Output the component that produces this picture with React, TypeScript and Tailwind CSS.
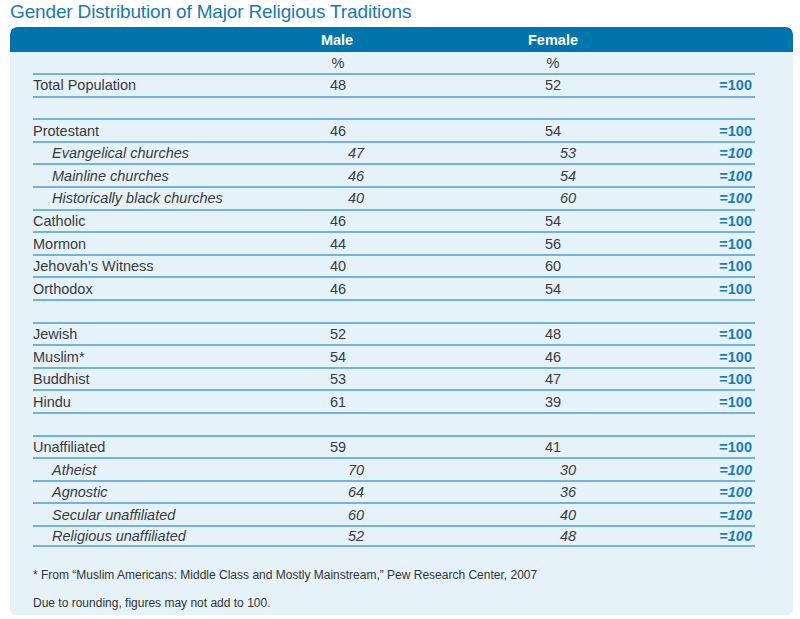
import React from "react";

type Row = { label?: string; male?: string; female?: string; sub?: boolean };

const rows: Row[] = [
  { label: "Total Population", male: "48", female: "52" },
  {},
  { label: "Protestant", male: "46", female: "54" },
  { label: "Evangelical churches", male: "47", female: "53", sub: true },
  { label: "Mainline churches", male: "46", female: "54", sub: true },
  { label: "Historically black churches", male: "40", female: "60", sub: true },
  { label: "Catholic", male: "46", female: "54" },
  { label: "Mormon", male: "44", female: "56" },
  { label: "Jehovah’s Witness", male: "40", female: "60" },
  { label: "Orthodox", male: "46", female: "54" },
  {},
  { label: "Jewish", male: "52", female: "48" },
  { label: "Muslim*", male: "54", female: "46" },
  { label: "Buddhist", male: "53", female: "47" },
  { label: "Hindu", male: "61", female: "39" },
  {},
  { label: "Unaffiliated", male: "59", female: "41" },
  { label: "Atheist", male: "70", female: "30", sub: true },
  { label: "Agnostic", male: "64", female: "36", sub: true },
  { label: "Secular unaffiliated", male: "60", female: "40", sub: true },
  { label: "Religious unaffiliated", male: "52", female: "48", sub: true },
];

const App = () => {
  return (
    <div className="w-[800px] h-[619px] bg-white font-['Liberation_Sans',Arial,sans-serif] text-[#3a3a3a]">
      <h1 className="pl-[10px] pt-[1px] h-[27px] text-[19px] leading-[22px] tracking-[-0.15px] text-[#1a78b2]">
        Gender Distribution of Major Religious Traditions
      </h1>
      <div className="ml-[10px] w-[783px] h-[588px] rounded-t-[7px] rounded-b-[6px] bg-[#e5f2fa] overflow-hidden">
        <div className="h-[25px] bg-[#0075ad] rounded-t-[7px] flex items-center pt-[3px] pl-[23px] text-white font-bold text-[14.5px]">
          <div className="w-[270px]"></div>
          <div className="w-[68px] text-center">Male</div>
          <div className="w-[147px]"></div>
          <div className="w-[70px] text-center">Female</div>
        </div>
        <div className="pl-[23px] w-[745px]">
          <div className="h-[21px] flex items-center text-[14.5px] pt-[3px]">
            <div className="w-[270px]"></div>
            <div className="w-[70px] text-center">%</div>
            <div className="w-[145px]"></div>
            <div className="w-[70px] text-center">%</div>
          </div>
          {rows.map((r, i) => (
            <div
              key={i}
              className={
                "h-[22.6px] flex items-center pt-[2px] text-[14.5px] border-t-2 border-[#72b3dc]" +
                (i === rows.length - 1 ? " border-b-2" : "")
              }
            >
              {r.label && (
                <>
                  <div className={r.sub ? "w-[270px] pl-[19px] italic" : "w-[270px]"}>{r.label}</div>
                  <div className={r.sub ? "w-[70px] text-center pl-[36px] italic" : "w-[70px] text-center"}>
                    {r.male}
                  </div>
                  <div className="w-[145px]"></div>
                  <div className={r.sub ? "w-[70px] text-center pl-[30px] italic" : "w-[70px] text-center"}>
                    {r.female}
                  </div>
                  <div
                    className={
                      "flex-1 text-right pr-[3px] font-bold text-[#1b7db8]" + (r.sub ? " italic" : "")
                    }
                  >
                    =100
                  </div>
                </>
              )}
            </div>
          ))}
          <p className="mt-[21px] text-[12px] leading-[14px] text-[#333]">
            * From “Muslim Americans: Middle Class and Mostly Mainstream,” Pew Research Center, 2007
          </p>
          <p className="mt-[14px] text-[12px] leading-[14px] text-[#333]">
            Due to rounding, figures may not add to 100.
          </p>
        </div>
      </div>
    </div>
  );
};

export default App;
